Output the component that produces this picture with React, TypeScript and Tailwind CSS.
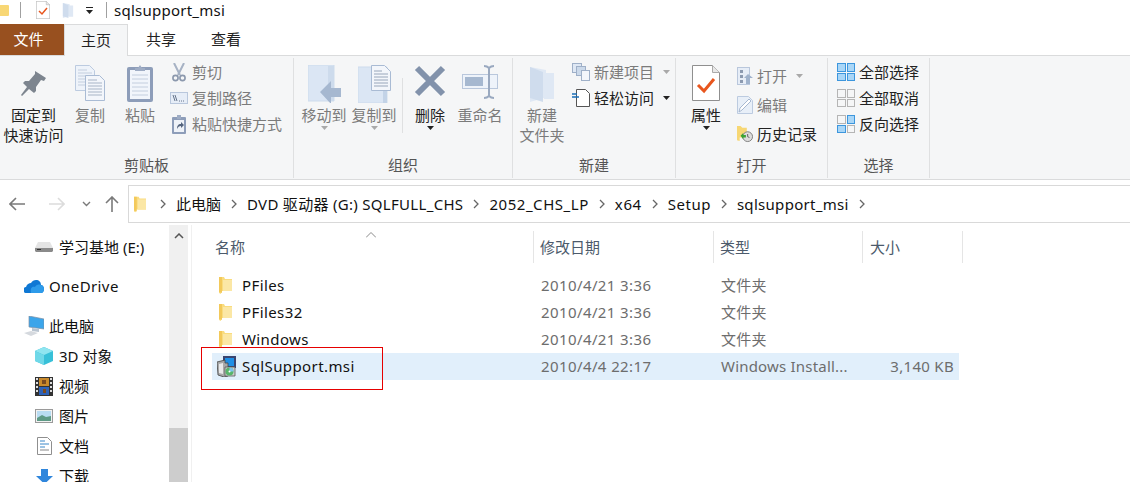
import type { ReactNode } from "react";

/* ===== Small drawn icons ===== */
function Folder({ className = "w-[13px] h-[17px]" }: { className?: string }) {
  return (
    <svg viewBox="0 0 13 17" className={className}>
      <path d="M0 0h5l1 2h7v12H2v3l-2-1z" fill="#f9dc7f" />
      <path d="M0 0h3v16l-3-1z" fill="#f3c95a" />
      <path d="M4 3h9v11H4z" fill="#fbe7a5" />
    </svg>
  );
}

function PaleFolder({ className }: { className: string }) {
  return (
    <svg viewBox="0 0 24 35" className={className}>
      <path d="M0 0l16 3v3h8v26H14v-1l-14 4z" fill="#dfe8f4" />
      <path d="M0 0l13 5v30L0 31z" fill="#cfdced" />
    </svg>
  );
}

function CheckDoc({ className }: { className: string }) {
  return (
    <svg viewBox="0 0 28 36" className={className}>
      <path d="M.5.5h20l7 7v28H.5z" fill="#fff" stroke="#8f8f8f" />
      <path d="M20.5.5v7h7" fill="#e8e8e8" stroke="#aaa" />
      <path d="M6 20l6 6 10-12" fill="none" stroke="#e8561e" strokeWidth="3" />
    </svg>
  );
}

function CopyDocs() {
  return (
    <svg viewBox="0 0 30 36" className="w-[30px] h-[36px]">
      <path d="M.5.5h14l5 5v20H.5z" fill="#eef3fa" stroke="#bccbe0" />
      <path d="M3 5h9M3 8h14M3 11h14M3 14h14M3 17h14M3 20h14" stroke="#c3cede" />
      <path d="M10.500 10.500h14l5 5v20h-19z" fill="#f3f6fb" stroke="#a9bbd4" />
      <path d="M13 15h9M13 18h14M13 21h14M13 24h14M13 27h14M13 30h14" stroke="#a7b4c6" />
    </svg>
  );
}

function Caret({ muted = false }: { muted?: boolean }) {
  return (
    <svg viewBox="0 0 7 4" className="w-[7px] h-[4px]">
      <path d="M0 0h7L3.500 4z" fill={muted ? "#a9a9a9" : "#222"} />
    </svg>
  );
}

function Pin() {
  return (
    <svg viewBox="0 0 25 25" className="w-[25px] h-[25px]">
      <path d="M14 0l11 7-2 3-3-1-5 7 0 4-2 2-5-4-7 7-1-1 6-8-4-4 2-2 4 0 6-7z" fill="#7d858f" />
    </svg>
  );
}

function Clipboard() {
  return (
    <svg viewBox="0 0 26 37" className="w-[26px] h-[37px]">
      <rect width="26" height="35" y="2" rx="2" fill="#8d9db9" />
      <rect x="3" y="5" width="20" height="29" fill="#f1f5fb" />
      <path d="M5 10h16M5 14h16M5 18h16M5 22h16M5 26h16M5 30h16" stroke="#c3cede" />
      <path d="M8 6V3h3l2-3 2 3h3v3z" fill="#9eacc4" />
    </svg>
  );
}

function Scissors() {
  return (
    <svg viewBox="0 0 14 19" className="w-[14px] h-[19px]">
      <path d="M2 0l6 12M12 0L6 12" stroke="#a6b2c4" strokeWidth="2" fill="none" />
      <circle cx="3.500" cy="15" r="2.600" fill="none" stroke="#8b98ad" strokeWidth="1.600" />
      <circle cx="10.500" cy="15" r="2.600" fill="none" stroke="#8b98ad" strokeWidth="1.600" />
    </svg>
  );
}

function PathIcon() {
  return (
    <svg viewBox="0 0 18 12" className="w-[18px] h-[12px]">
      <rect x=".5" y=".5" width="17" height="11" fill="#e6edf7" stroke="#b9c7dc" />
      <path d="M3 3l2 6M5 3l2 6" stroke="#66758c" />
      <path d="M9 9h1M11 9h1M13 9h1" stroke="#66758c" />
    </svg>
  );
}

function ShortcutIcon() {
  return (
    <svg viewBox="0 0 14 19" className="w-[14px] h-[19px]">
      <rect y="2" width="14" height="17" rx="1" fill="#8d9db9" />
      <rect x="2" y="5" width="10" height="12" fill="#eef2f8" />
      <path d="M5 0h4v4H5z" fill="#9eacc4" />
      <path d="M5 14c0-3 1-5 4-5V7l3 3-3 3v-2c-2 0-3 1-4 3z" fill="#55657e" />
    </svg>
  );
}

function MoveTo() {
  return (
    <svg viewBox="0 0 33 38" className="w-[33px] h-[38px]">
      <path d="M0 0h26v36H0z" fill="#dbe6f4" stroke="#cddbec" />
      <path d="M20 1h6v35h-6z" fill="#cddbec" />
      <path d="M12 27l11-11v7h10v9H23v7z" fill="#a6b8d0" />
    </svg>
  );
}

function CopyTo() {
  return (
    <svg viewBox="0 0 33 38" className="w-[33px] h-[38px]">
      <path d="M0 2h29v36H0z" fill="#dbe6f4" stroke="#cddbec" />
      <path d="M25 26h4v12h-4z" fill="#c3d3e7" />
      <path d="M13.500 .5h13l6 6v19h-19z" fill="#f3f6fb" stroke="#a9bbd4" />
      <path d="M16 6h8M16 9h14M16 12h14M16 15h14M16 18h14M16 21h14" stroke="#98a6ba" />
    </svg>
  );
}

function Cross() {
  return (
    <svg viewBox="0 0 32 32" className="w-[32px] h-[32px]">
      <path d="M3 3l26 26M29 3L3 29" stroke="#8292ab" strokeWidth="6" />
    </svg>
  );
}

function Rename() {
  return (
    <svg viewBox="0 0 36 34" className="w-[36px] h-[34px]">
      <rect x=".5" y="9.500" width="35" height="14" fill="#eef3fa" stroke="#b9c7dc" />
      <rect x="3" y="12" width="18" height="9" fill="#a6b8d0" />
      <path d="M22 1c2 0 4 1 5 2 1-1 3-2 5-2M27 3v28M22 33c2 0 4-1 5-2 1 1 3 2 5 2" fill="none" stroke="#9aa9c0" strokeWidth="2" />
    </svg>
  );
}

function NewItem() {
  return (
    <svg viewBox="0 0 18 18" className="w-[18px] h-[18px]">
      <rect x=".5" y=".5" width="9" height="9" fill="#dfe8f4" stroke="#9fb0c8" />
      <rect x="4.500" y="3.500" width="9" height="9" fill="#cbd9ea" stroke="#9fb0c8" />
      <rect x="9.500" y="7.500" width="8" height="10" fill="#f3f6fb" stroke="#9fb0c8" />
    </svg>
  );
}

function EasyAccess() {
  return (
    <svg viewBox="0 0 18 18" className="w-[18px] h-[18px]">
      <path d="M4.500 .5h9l4 4v13h-13z" fill="#fff" stroke="#555" />
      <path d="M0 5h5M0 8h7" stroke="#1b6fb8" strokeWidth="1.400" />
    </svg>
  );
}

function OpenIcon() {
  return (
    <svg viewBox="0 0 16 18" className="w-[16px] h-[18px]">
      <rect x=".5" y=".5" width="12" height="17" fill="#e6edf7" stroke="#b9c7dc" />
      <path d="M3 3h3v3H3zM3 8h3v3H3zM3 13h3v3H3z" fill="#8c9ab0" />
      <path d="M7 11l4-4 5 4h-3v6H9v-6z" fill="#9fb2cc" />
    </svg>
  );
}

function EditIcon() {
  return (
    <svg viewBox="0 0 16 18" className="w-[16px] h-[18px]">
      <path d="M.5 .5h11l4 4v13H.5z" fill="#e8eff8" stroke="#bccbe0" />
      <path d="M2 16l1-4 9-9 2 2-9 9z" fill="#fff" stroke="#a7b8d0" />
    </svg>
  );
}

function HistoryIcon() {
  return (
    <svg viewBox="0 0 18 18" className="w-[18px] h-[18px]">
      <path d="M0 0h4l2 2h5v11H3v4l-3-1z" fill="#f7d774" />
      <circle cx="12" cy="12" r="5.500" fill="#dcdcdc" stroke="#777" />
      <path d="M12 9v3l2 1" stroke="#555" fill="none" />
      <path d="M4 11l3-3v2h3v3H7v2z" fill="#3aa335" />
    </svg>
  );
}

function SelectGrid({ filled }: { filled: boolean[] }) {
  return (
    <div className="grid grid-cols-2 gap-px w-[18px] h-[18px]">
      {filled.map((on, i) => (
        <div
          key={i}
          className={on ? "border border-[#3c96dd] bg-[#a9d6f7]" : "border border-[#b5b5b5] bg-[#f5f6f7]"}
        />
      ))}
    </div>
  );
}

function Msi() {
  return (
    <svg viewBox="0 0 20 21" className="w-[20px] h-[21px]">
      <path d="M6 0h13v12H6z" fill="#3a4470" />
      <path d="M8 2h9v8H8z" fill="#1f8fe6" />
      <path d="M0 6l8-2v3h3v13l-4 1-6-2z" fill="#a8a8a8" stroke="#444" strokeWidth=".8" />
      <path d="M2 8l4-1v11l-4-1z" fill="#e8e8e8" />
      <path d="M8 11h10v9H8z" fill="#cfcfcf" stroke="#555" strokeWidth=".8" />
      <circle cx="12.500" cy="15.500" r="4" fill="#58b56a" />
      <path d="M12.500 11.500a4 4 0 0 1 4 4h-4z" fill="#7fc4ee" />
      <circle cx="12.500" cy="15.500" r="1" fill="#fff" />
    </svg>
  );
}

function Drive() {
  return (
    <svg viewBox="0 0 18 10" className="w-[18px] h-[10px]">
      <path d="M3 0h12l3 6H0z" fill="#e4e4e4" />
      <path d="M0 6h18v3l-1 1H1L0 9z" fill="#8a8a8a" />
      <path d="M2 7.500h4" stroke="#333" />
    </svg>
  );
}

function OneDrive() {
  return (
    <svg viewBox="0 0 20 13" className="w-[20px] h-[13px]">
      <path d="M3 13a3 3 0 0 1-1-6c1-3 3-4 5-4 1-2 3-3 5-3 3 0 5 2 5 5 2 0 3 2 3 4s-1 4-3 4z" fill="#0f78d4" />
      <path d="M7 13h10c2 0 3-2 3-4s-1-3-3-4c-3-1-5 0-6 2-3-1-5 1-4 6z" fill="#2d9bea" />
    </svg>
  );
}

function Pc() {
  return (
    <svg viewBox="0 0 20 20" className="w-[20px] h-[20px]">
      <path d="M5 0l15 3v10L5 11z" fill="#3ca5ea" stroke="#7f8fa3" strokeWidth=".7" />
      <path d="M8 12l7 1v3l-7-1z" fill="#b9c4d0" />
      <path d="M0 17l7-2 7 2-7 3z" fill="#d5d9de" />
    </svg>
  );
}

function Cube() {
  return (
    <svg viewBox="0 0 18 18" className="w-[18px] h-[18px]">
      <path d="M9 0l9 4v10l-9 4-9-4V4z" fill="#37c0d8" />
      <path d="M9 0l9 4-9 4-9-4z" fill="#8fe5f0" />
      <path d="M0 4l9 4v10l-9-4z" fill="#6fd8e8" />
    </svg>
  );
}

function Film() {
  return (
    <svg viewBox="0 0 18 19" className="w-[18px] h-[19px]">
      <rect width="18" height="19" fill="#333" />
      <path d="M1 1h2v2H1zM1 5h2v2H1zM1 9h2v2H1zM1 13h2v2H1zM15 1h2v2h-2zM15 5h2v2h-2zM15 9h2v2h-2zM15 13h2v2h-2z" fill="#ddd" />
      <rect x="4" y="1" width="10" height="8" fill="#c98a2c" />
      <rect x="4" y="10" width="10" height="8" fill="#2e62b8" />
      <path d="M7 3h4v4H7zM8 12h3v4H8z" fill="#7a4a20" />
    </svg>
  );
}

function Picture() {
  return (
    <svg viewBox="0 0 18 14" className="w-[18px] h-[14px]">
      <rect x=".5" y=".5" width="17" height="13" fill="#f2f2f2" stroke="#9a9a9a" />
      <rect x="2" y="2" width="14" height="10" fill="#b9dcf2" />
      <path d="M2 9l5-3 4 2 5-1v5H2z" fill="#5e9a86" />
    </svg>
  );
}

function Paper() {
  return (
    <svg viewBox="0 0 15 18" className="w-[15px] h-[18px]">
      <path d="M.5 .5h10l4 4v13H.5z" fill="#fff" stroke="#8f8f8f" />
      <path d="M3 4h5M3 7h9M3 10h5" stroke="#3a87c8" />
      <path d="M3 13h9" stroke="#888" />
    </svg>
  );
}

function Download() {
  return (
    <svg viewBox="0 0 17 15" className="w-[17px] h-[15px]">
      <path d="M5 0h7v7h5l-8.500 8L0 7h5z" fill="#2f86dc" />
    </svg>
  );
}

function Chevron() {
  return (
    <svg viewBox="0 0 6 10" className="w-[6px] h-[10px] shrink-0">
      <path d="M1 1l4 4-4 4" fill="none" stroke="#666" strokeWidth="1.300" />
    </svg>
  );
}

/* ===== Ribbon parts ===== */
function BigButton({
  icon,
  lines,
  width,
  muted = true,
  caret,
  iconClass = "",
}: {
  icon: ReactNode;
  lines: string[];
  width: string;
  muted?: boolean;
  caret?: "muted" | "dark";
  iconClass?: string;
}) {
  return (
    <div className={`flex flex-col items-center shrink-0 ${width}`}>
      <div className={`h-[47px] pt-[7px] flex justify-center ${iconClass}`}>{icon}</div>
      {lines.map((l) => (
        <div key={l} className={`leading-[20px] whitespace-nowrap ${muted ? "text-[#7b7b7b]" : "text-[#222]"}`}>
          {l}
        </div>
      ))}
      {caret && (
        <div className="mt-[1px]">
          <Caret muted={caret === "muted"} />
        </div>
      )}
    </div>
  );
}

function SmallButton({
  icon,
  label,
  muted = true,
  caret,
  iconWidth = "w-[18px]",
}: {
  icon: ReactNode;
  label: string;
  muted?: boolean;
  caret?: "muted" | "dark";
  iconWidth?: string;
}) {
  return (
    <div className="flex items-center gap-1 h-[26px] whitespace-nowrap">
      <div className={`flex justify-center ${iconWidth}`}>{icon}</div>
      <span className={muted ? "text-[#7b7b7b]" : "text-[#222]"}>{label}</span>
      {caret && (
        <span className="ml-[5px]">
          <Caret muted={caret === "muted"} />
        </span>
      )}
    </div>
  );
}

function Group({ label, width, children }: { label: string; width: string; children: ReactNode }) {
  return (
    <div className={`flex flex-col shrink-0 h-[120px] border-r border-[#dfe0e1] ${width}`}>
      <div className="flex h-[97px]">{children}</div>
      <div className="text-center text-[#555] leading-[20px]">{label}</div>
    </div>
  );
}

/* ===== File list data ===== */
const crumbs = [
  { label: "此电脑", track: "tracking-[0px]" },
  { label: "DVD 驱动器 (G:) SQLFULL_CHS", track: "tracking-[0.3px]" },
  { label: "2052_CHS_LP", track: "tracking-[0.55px]" },
  { label: "x64", track: "tracking-[0.6px]" },
  { label: "Setup", track: "tracking-[0.5px]" },
  { label: "sqlsupport_msi", track: "tracking-[0.3px]" },
];

const files = [
  { name: "PFiles", date: "2010/4/21 3:36", type: "文件夹", size: "" },
  { name: "PFiles32", date: "2010/4/21 3:36", type: "文件夹", size: "" },
  { name: "Windows", date: "2010/4/21 3:36", type: "文件夹", size: "" },
  { name: "SqlSupport.msi", date: "2010/4/4 22:17", type: "Windows Install...", size: "3,140 KB" },
];

const navItems = [
  { label: "3D 对象", icon: <Cube /> },
  { label: "视频", icon: <Film /> },
  { label: "图片", icon: <Picture /> },
  { label: "文档", icon: <Paper /> },
  { label: "下载", icon: <Download /> },
];

export default function App() {
  return (
    <div className="relative w-[1130px] h-[482px] overflow-hidden bg-white text-[15px] text-[#222] [font-family:'Noto_Sans','Noto_Sans_CJK_SC',sans-serif]">
      {/* ===== Title bar ===== */}
      <div className="flex items-center h-[24px] pb-[4px]">
        <div className="w-[9px] h-[11px] bg-[#f8d775] rounded-r-[1px]" />
        <div className="w-px h-[16px] bg-[#a0a0a0] ml-[11px]" />
        <CheckDoc className="w-[14px] h-[18px] ml-[15px]" />
        <PaleFolder className="w-[12px] h-[15px] ml-[12px]" />
        <div className="ml-[12px] flex flex-col gap-[2px] items-center">
          <div className="w-[7px] h-px bg-[#222]" />
          <Caret />
        </div>
        <div className="w-px h-[16px] bg-[#a0a0a0] ml-[13px]" />
        <div className="ml-[7px] text-[#111] tracking-[0.25px]">sqlsupport_msi</div>
      </div>

      {/* ===== Tabs ===== */}
      <div className="flex h-[32px] border-b border-[#dadbdc]">
        <div className="w-[64px] h-[31px] pr-[7px] flex items-center justify-center bg-[#98501f] text-white">文件</div>
        <div className="w-[64px] h-[32px] flex items-center justify-center bg-[#f5f6f7] border border-b-0 border-[#dadbdc]">主页</div>
        <div className="w-[66px] flex items-center justify-center">共享</div>
        <div className="w-[64px] flex items-center justify-center">查看</div>
      </div>

      {/* ===== Ribbon ===== */}
      <div className="flex h-[124px] pt-[2px] bg-[#f5f6f7] border-b border-[#dadbdc]">
        <Group label="剪贴板" width="w-[294px]">
          <BigButton icon={<Pin />} lines={["固定到", "快速访问"]} width="w-[67px]" muted={false} iconClass="pt-[13px]" />
          <BigButton icon={<CopyDocs />} lines={["复制"]} width="w-[46px]" />
          <BigButton icon={<Clipboard />} lines={["粘贴"]} width="w-[54px]" />
          <div className="flex flex-col pt-[1px] pl-[3px]">
            <SmallButton icon={<Scissors />} label="剪切" />
            <SmallButton icon={<PathIcon />} label="复制路径" />
            <SmallButton icon={<ShortcutIcon />} label="粘贴快捷方式" />
          </div>
        </Group>

        <Group label="组织" width="w-[219px]">
          <BigButton icon={<MoveTo />} lines={["移动到"]} width="w-[50px] ml-[5px]" caret="muted" />
          <BigButton icon={<CopyTo />} lines={["复制到"]} width="w-[50px]" caret="muted" />
          <div className="w-px h-[55px] bg-[#dfe0e1] mt-[20px] ml-[3px] mr-[7px]" />
          <BigButton icon={<Cross />} lines={["删除"]} width="w-[40px]" muted={false} caret="dark" />
          <BigButton icon={<Rename />} lines={["重命名"]} width="w-[50px] ml-[5px]" />
        </Group>

        <Group label="新建" width="w-[163px]">
          <BigButton icon={<PaleFolder className="w-[24px] h-[35px]" />} lines={["新建", "文件夹"]} width="w-[50px] ml-[4px]" iconClass="pt-[9px]" />
          <div className="flex flex-col pt-[1px] pl-[5px]">
            <SmallButton icon={<NewItem />} label="新建项目" caret="muted" />
            <SmallButton icon={<EasyAccess />} label="轻松访问" muted={false} caret="dark" />
          </div>
        </Group>

        <Group label="打开" width="w-[152px]">
          <BigButton icon={<CheckDoc className="w-[28px] h-[36px]" />} lines={["属性"]} width="w-[60px]" muted={false} caret="dark" />
          <div className="flex flex-col pt-[5px] ml-[1px] gap-[3px]">
            <SmallButton icon={<OpenIcon />} label="打开" caret="muted" iconWidth="w-[16px]" />
            <SmallButton icon={<EditIcon />} label="编辑" iconWidth="w-[16px]" />
            <SmallButton icon={<HistoryIcon />} label="历史记录" muted={false} iconWidth="w-[16px]" />
          </div>
        </Group>

        <Group label="选择" width="w-[102px]">
          <div className="flex flex-col pt-[1px] pl-[9px]">
            <SmallButton icon={<SelectGrid filled={[true, true, true, true]} />} label="全部选择" muted={false} />
            <SmallButton icon={<SelectGrid filled={[false, false, false, false]} />} label="全部取消" muted={false} />
            <SmallButton icon={<SelectGrid filled={[false, true, true, false]} />} label="反向选择" muted={false} />
          </div>
        </Group>
      </div>

      {/* ===== Address row ===== */}
      <div className="flex items-center h-[45px] pt-[3px]">
        <div className="flex items-center w-[128px] shrink-0">
          <svg viewBox="0 0 16 14" className="w-[16px] h-[14px] ml-[9px]">
            <path d="M7 1L1 7l6 6M1 7h15" fill="none" stroke="#7a7a7a" strokeWidth="1.600" />
          </svg>
          <svg viewBox="0 0 16 14" className="w-[16px] h-[14px] ml-[24px]">
            <path d="M9 1l6 6-6 6M15 7H0" fill="none" stroke="#dcdcdc" strokeWidth="1.600" />
          </svg>
          <svg viewBox="0 0 9 6" className="w-[9px] h-[6px] ml-[17px]">
            <path d="M1 1l3.500 3.500L8 1" fill="none" stroke="#7a7a7a" strokeWidth="1.400" />
          </svg>
          <svg viewBox="0 0 14 16" className="w-[14px] h-[16px] ml-[14px]">
            <path d="M1 7l6-6 6 6M7 1v15" fill="none" stroke="#7a7a7a" strokeWidth="1.600" />
          </svg>
        </div>
        <div className="flex-1 h-[38px] -mr-px flex items-center border border-[#d9d9d9] pl-[5px]">
          <Folder className="w-[12px] h-[17px]" />
          <span className="ml-[14px]"><Chevron /></span>
          {crumbs.map((c) => (
            <div key={c.label} className="flex items-center">
              <span className={`ml-[10px] text-[#111] whitespace-nowrap ${c.track}`}>{c.label}</span>
              <span className="ml-[10px]"><Chevron /></span>
            </div>
          ))}
        </div>
      </div>

      {/* ===== Main ===== */}
      <div className="flex h-[257px]">
        {/* Navigation */}
        <div className="w-[169px] shrink-0 pt-[7px] text-[#111]">
          <div className="flex items-center h-[30px] pl-[35px] gap-[6px]">
            <Drive />
            <span className="whitespace-nowrap">学习基地 (E:)</span>
          </div>
          <div className="flex items-center h-[30px] mt-[9px] pl-[24px] gap-[5px]">
            <OneDrive />
            <span className="tracking-[0.4px]">OneDrive</span>
          </div>
          <div className="flex items-center h-[30px] mt-[10px] pl-[24px] gap-[5px]">
            <Pc />
            <span>此电脑</span>
          </div>
          {navItems.map((item) => (
            <div key={item.label} className="flex items-center h-[30px] pl-[35px]">
              <div className="w-[18px] flex justify-center">{item.icon}</div>
              <span className="ml-[6px] whitespace-nowrap">{item.label}</span>
            </div>
          ))}
        </div>

        {/* Scrollbar */}
        <div className="w-[19px] shrink-0 bg-[#f0f0f0] flex flex-col items-center">
          <svg viewBox="0 0 10 6" className="w-[10px] h-[6px] mt-[8px] mb-[189px]">
            <path d="M1 5l4-4 4 4" fill="none" stroke="#555" strokeWidth="1.500" />
          </svg>
          <div className="w-full flex-1 bg-[#cdcdcd]" />
        </div>

        {/* File list */}
        <div className="flex-1 ml-[3px] border-l border-[#f0f0f0] pl-[20px] pt-[6px]">
          <div className="relative flex h-[32px] text-[#4c5a6b]">
            <svg viewBox="0 0 10 6" className="absolute left-[154px] top-[1px] w-[10px] h-[6px]">
              <path d="M0 5.500l5-5 5 5" fill="none" stroke="#8a8a8a" />
            </svg>
            <div className="w-[322px] pl-[3px] flex items-center border-r border-[#e5e5e5]">名称</div>
            <div className="w-[180px] pl-[6px] flex items-center border-r border-[#e5e5e5]">修改日期</div>
            <div className="w-[149px] pl-[6px] flex items-center border-r border-[#e5e5e5]">类型</div>
            <div className="w-[100px] pl-[7px] flex items-center border-r border-[#e5e5e5]">大小</div>
          </div>
          <div className="w-[747px] mt-[9px]">
            {files.map((f, i) => {
              const selected = i === files.length - 1;
              return (
                <div key={f.name} className={`flex items-center h-[27px] ${selected ? "bg-[#e1effb]" : ""}`}>
                  <div className="w-[322px] flex items-center">
                    <div className={`w-[30px] flex ${selected ? "pl-[5px]" : "pl-[7px]"}`}>
                      {selected ? <Msi /> : <Folder />}
                    </div>
                    <span className="text-[#111] tracking-[0.4px]">{f.name}</span>
                  </div>
                  <div className="w-[180px] pl-[7px] text-[#6d6d6d] whitespace-nowrap tracking-[0.4px]">{f.date}</div>
                  <div className="w-[149px] pl-[7px] text-[#6d6d6d] whitespace-nowrap tracking-[0.2px]">{f.type}</div>
                  <div className="flex-1 pr-[5px] text-right text-[#6d6d6d] whitespace-nowrap tracking-[0.3px]">{f.size}</div>
                </div>
              );
            })}
          </div>
        </div>
      </div>

      {/* Red annotation box drawn over the screenshot */}
      <div className="absolute left-[201px] top-[347px] w-[182px] h-[43px] border border-[#e60000]" />
    </div>
  );
}
